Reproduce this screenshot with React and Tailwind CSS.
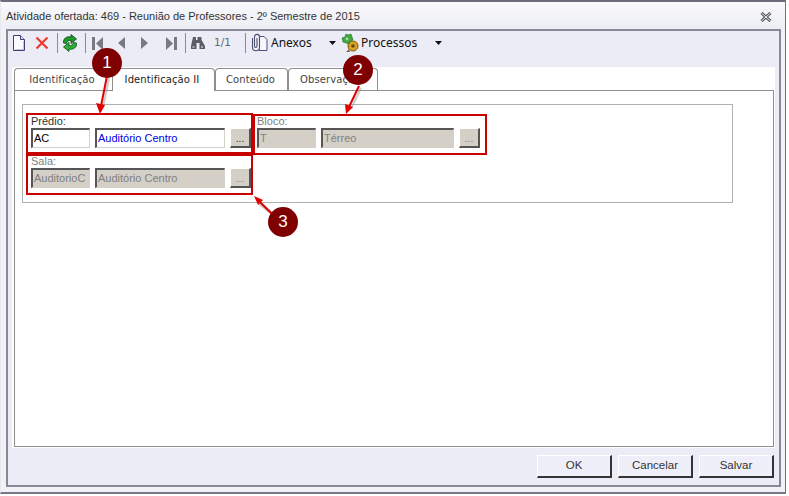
import React from "react";

const DOC = () => (
  <svg width="16" height="18" viewBox="0 0 16 18">
    <path d="M2.500 1.500h7l4 4v11h-11z" fill="#fbfbff" stroke="#3c4170" />
    <path d="M9.500 1.500v4h4" fill="#d8dcec" stroke="#3c4170" />
    <path d="M12.500 7v9M4 15.500h8" stroke="#c4c8de" />
  </svg>
);
const RedX = () => (
  <svg width="14" height="14" viewBox="0 0 14 14">
    <path d="M1.500 1.500l11 11M12.500 1.500l-11 11" stroke="#ee3a2c" strokeWidth="2.200" />
  </svg>
);
const Refresh = () => (
  <svg width="14" height="18" viewBox="0 0 14 18">
    <path d="M.5 9C0 4.500 3.500 2 8 3V.5L13.500 5 8 9.500V6.500C6 6 4 7 3.500 9.500z" fill="#1e9a2a" stroke="#0b4a14" strokeWidth=".8" />
    <path d="M13.500 9c.5 4.500-3 7-7.500 6v2.500L.5 13 6 8.500v3c2 .5 4-.5 4.500-3z" fill="#2cb03a" stroke="#0b4a14" strokeWidth=".8" />
  </svg>
);
const Sep = () => <div className="w-px h-[20px] bg-[#8b8b98] shrink-0" />;
const First = () => (
  <svg width="12" height="13" viewBox="0 0 12 13">
    <rect x="0" y="0" width="3" height="13" fill="#777a80" />
    <path d="M11 0v13L4 6.500z" fill="#777a80" />
  </svg>
);
const Last = () => (
  <svg width="12" height="13" viewBox="0 0 12 13">
    <rect x="9" y="0" width="3" height="13" fill="#777a80" />
    <path d="M1 0v13l7-6.500z" fill="#777a80" />
  </svg>
);
const Prev = () => (
  <svg width="7" height="12" viewBox="0 0 7 12"><path d="M7 0v12L0 6z" fill="#777a80" /></svg>
);
const Next = () => (
  <svg width="7" height="12" viewBox="0 0 7 12"><path d="M0 0v12l7-6z" fill="#777a80" /></svg>
);
const Binoculars = () => (
  <svg width="16" height="14" viewBox="0 0 16 14">
    <path d="M3 1h3v3h1.500V1h1V1h3v3L15 10v3H9.500V7h-3v6H1v-3z" fill="#5a5d66" />
    <rect x="2.500" y="10" width="2" height="2" fill="#a8abb4" />
    <rect x="11" y="10" width="2" height="2" fill="#a8abb4" />
  </svg>
);
const Clip = () => (
  <svg width="17" height="20" viewBox="0 0 17 20">
    <path d="M8 3.500h5l3 3v11H8z" fill="#f6f6fc" stroke="#4a4f80" />
    <path d="M1.500 5v9c0 5 7 5 7 0V4c0-3.500-5-3.500-5 0v9c0 2 2.500 2 2.500 0V5" fill="#eef0f8" stroke="#4a5070" strokeWidth="1.100" />
  </svg>
);
const Gears = () => (
  <svg width="18" height="20" viewBox="0 0 18 20">
    <circle cx="12" cy="13" r="5" fill="#d9a520" stroke="#7a5a10" />
    <circle cx="12" cy="13" r="1.800" fill="#6a4a10" />
    <path d="M1 5l3-1 1-3 2 1 3-1 1 3 1 3-3 1-1 3-3-1-3-1z" fill="#3fa83f" stroke="#1d6a2a" strokeWidth=".6" />
    <circle cx="6" cy="6" r="1.400" fill="#a8e0a0" />
    <path d="M8 16l1 3h-4z" fill="#7a6a50" />
  </svg>
);
const Caret = () => (
  <svg width="7" height="4" viewBox="0 0 7 4"><path d="M0 0h7L3.500 4z" fill="#111" /></svg>
);

function Tab({ children, active, className = "" }) {
  return (
    <div
      className={`h-[22px] flex items-center justify-center pb-px rounded-t-[4px] border-[#8e8e8e] border-x border-t bg-white ${
        active ? "relative z-10 h-[23px] -mb-px text-[#222]" : "text-[#444]"
      } ${className}`}
    >
      {children}
    </div>
  );
}

function Input({ w, value, tone }) {
  const base =
    tone === "disabled"
      ? "bg-[#d4d0c8] text-[#808080] border-b-[#d4d0c8] border-r-[#d4d0c8]"
      : "bg-white border-b-[#d4d0c8] border-r-[#d4d0c8]";
  const color = tone === "blue" ? "text-[#0000e6]" : tone === "disabled" ? "" : "text-black";
  return (
    <div
      className={`h-[20px] ${w} border border-t-2 border-l-2 border-t-[#555] border-l-[#555] ${base} ${color} pl-px flex items-center text-[11px] leading-none overflow-hidden whitespace-nowrap font-['Liberation_Sans',sans-serif]`}
    >
      {value}
    </div>
  );
}

function Ellipsis({ disabled }) {
  return (
    <div
      className={`h-[20px] w-[21px] bg-[#d4d0c8] border border-white border-r-2 border-b-2 border-r-[#555] border-b-[#555] flex items-end justify-center pb-[2px] text-[10px] leading-[10px] font-['Liberation_Sans',sans-serif] ${
        disabled ? "text-[#808080]" : "text-[#222]"
      }`}
    >
      ...
    </div>
  );
}

function Field({ label, code, name, tone, w1, w2, disabled }) {
  return (
    <div className="flex flex-col">
      <div className={`h-[14px] leading-[14px] text-[11px] font-['Liberation_Sans',sans-serif] ${disabled ? "text-[#808080]" : "text-[#333]"}`}>
        {label}
      </div>
      <div className="flex gap-[5px]">
        <Input w={w1} value={code} tone={disabled ? "disabled" : undefined} />
        <Input w={w2} value={name} tone={disabled ? "disabled" : tone} />
        <Ellipsis disabled={disabled} />
      </div>
    </div>
  );
}

function FBtn({ children }) {
  return (
    <div className="w-[75px] h-[23px] bg-[#eeeff8] border border-t-white border-l-white border-r-2 border-b-2 border-r-[#333] border-b-[#333] flex items-center justify-center text-[11.5px] text-[#333] font-['Liberation_Sans',sans-serif]">
      {children}
    </div>
  );
}

function Marker({ n, className }) {
  return (
    <div className={`absolute w-[30px] h-[30px] rounded-full bg-[#7e0000] text-white flex items-center justify-center text-[17px] z-30 font-['Liberation_Sans',sans-serif] ${className}`}>
      {n}
    </div>
  );
}

function Box({ className }) {
  return <div className={`absolute border-[2px] border-[#c80000] z-20 pointer-events-none ${className}`} />;
}

export default function App() {
  return (
    <div className="relative w-[789px] h-[496px] bg-white overflow-hidden">
      <div className="w-[786px] h-[494px] bg-[#f1f1f7] border-t-2 border-t-[#6b6e78] border-l border-l-[#e8e8ee] border-r border-r-[#70737e] border-b-2 border-b-[#777a84] flex flex-col">
        <div className="h-[27px] shrink-0 pl-[5px] pr-[13px] pt-[2px] flex items-center justify-between bg-gradient-to-b from-[#fafafc] to-[#ecedf4]">
          <div className="text-[11px] text-[#333] font-['Liberation_Sans',sans-serif] whitespace-nowrap">
            Atividade ofertada: 469 - Reunião de Professores - 2º Semestre de 2015
          </div>
          <svg width="12" height="10" viewBox="0 0 12 10">
            <path d="M1.500 1l9 8M10.500 1l-9 8" stroke="#555" strokeWidth="3" />
            <path d="M1.500 1l9 8M10.500 1l-9 8" stroke="#eee" strokeWidth="1" />
          </svg>
        </div>
        <div className="ml-[5px] mr-[4px] h-[458px] border-2 border-[#878a94] bg-[#ececf6] flex flex-col">
          <div className="h-[36px] shrink-0 pl-[3px] pb-[12px] flex items-center text-[#555]">
            <DOC />
            <div className="w-[8px]" />
            <RedX />
            <div className="w-[8px]" />
            <Sep />
            <div className="w-[5px]" />
            <Refresh />
            <div className="w-[8px]" />
            <Sep />
            <div className="w-[6px]" />
            <First />
            <div className="w-[14px]" />
            <Prev />
            <div className="w-[16px]" />
            <Next />
            <div className="w-[17px]" />
            <Last />
            <div className="w-[8px]" />
            <Sep />
            <div className="w-[4px]" />
            <Binoculars />
            <span className="ml-[8px] w-[18px] text-[10.5px] text-[#666] font-['DejaVu_Sans',sans-serif]">1/1</span>
            <div className="w-[13px]" />
            <Sep />
            <div className="w-[5px]" />
            <Clip />
            <span className="ml-[3px] w-[58px] text-[12px] text-[#111] font-['Noto_Sans',sans-serif]">Anexos</span>
            <Caret />
            <div className="w-[5px]" />
            <Gears />
            <span className="ml-[2px] w-[74px] text-[12px] text-[#111] font-['Noto_Sans',sans-serif]">Processos</span>
            <Caret />
          </div>
          <div className="mx-[4px] flex-1 bg-white pl-[2px] pr-px pt-[2px] flex flex-col">
            <div className="h-[21px] shrink-0 flex items-end text-[10px] tracking-[0.1px] font-['DejaVu_Sans',sans-serif]">
              <Tab className="w-[98px] pr-[3px] border-r-0 rounded-tr-none">Identificação</Tab>
              <Tab active className="w-[103px] pr-[3px]">Identificação II</Tab>
              <Tab className="w-[73px] pr-[2px]">Conteúdo</Tab>
              <Tab className="w-[90px]">Observações</Tab>
            </div>
            <div className="h-[357px] border border-[#8e8e8e] bg-white pl-[7px] pt-[13px]">
              <div className="w-[711px] h-[99px] border border-[#b0b0b0] pl-[8px] pt-[9px] flex flex-col gap-[6px]">
                <div className="flex gap-[6px]">
                  <Field label="Prédio:" code="AC" name="Auditório Centro" tone="blue" w1="w-[59px]" w2="w-[130px]" />
                  <Field label="Bloco:" code="T" name="Térreo" disabled w1="w-[59px]" w2="w-[133px]" />
                </div>
                <Field label="Sala:" code="AuditorioC" name="Auditório Centro" disabled w1="w-[59px]" w2="w-[130px]" />
              </div>
            </div>
          </div>
          <div className="h-[37px] shrink-0 flex items-center justify-end gap-[6px] pr-[5px]">
            <FBtn>OK</FBtn>
            <FBtn>Cancelar</FBtn>
            <FBtn>Salvar</FBtn>
          </div>
        </div>
      </div>

      <Box className="left-[26px] top-[113px] w-[227px] h-[41px]" />
      <Box className="left-[253px] top-[114px] w-[234px] h-[41px]" />
      <Box className="left-[26px] top-[154px] w-[227px] h-[41px]" />

      <svg className="absolute left-0 top-0 z-20" width="789" height="496" viewBox="0 0 789 496">
        <path d="M109 78L103 108" stroke="#9a9a9a" strokeWidth="2" opacity=".5" />
        <path d="M107 76L101 106" stroke="#e00000" strokeWidth="2" />
        <path d="M96 103l9 2-5 9z" fill="#e00000" />
        <path d="M361 88L351 109" stroke="#9a9a9a" strokeWidth="2" opacity=".5" />
        <path d="M359 86L349 107" stroke="#e00000" strokeWidth="2" />
        <path d="M345 104l8 3-7 7z" fill="#e00000" />
        <path d="M283 222L259 203" stroke="#9a9a9a" strokeWidth="3" opacity=".6" />
        <path d="M272 214L257 199" stroke="#e00000" strokeWidth="2" />
        <path d="M254 196l9 4-5 5z" fill="#e00000" />
      </svg>
      <Marker n="1" className="left-[92px] top-[48px]" />
      <Marker n="2" className="left-[343px] top-[55px]" />
      <Marker n="3" className="left-[268px] top-[207px]" />
    </div>
  );
}
